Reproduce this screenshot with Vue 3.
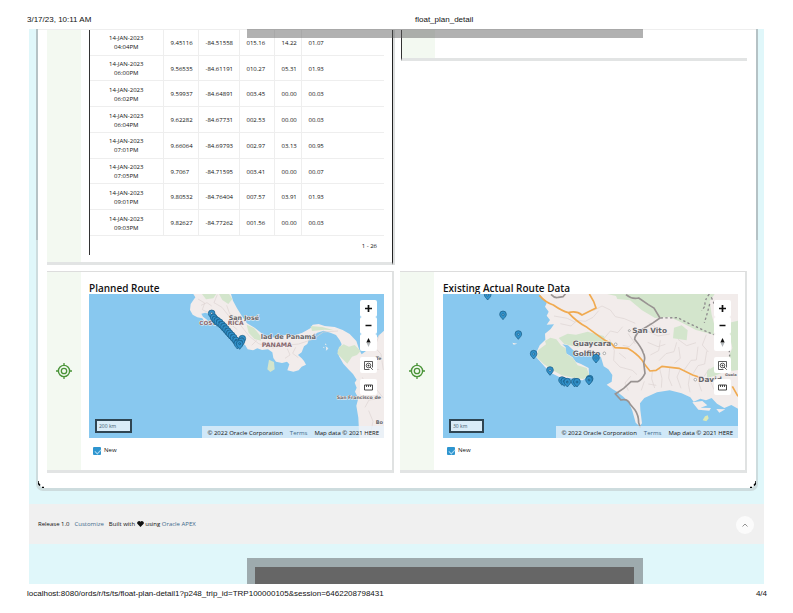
<script setup>
const points = [
  ['04:04PM', '9.45116', '-84.51558', '015.16', '14.22', '01.07'],
  ['06:00PM', '9.56535', '-84.61191', '010.27', '05.31', '01.93'],
  ['06:02PM', '9.59937', '-84.64891', '003.45', '00.00', '00.03'],
  ['06:04PM', '9.62282', '-84.67731', '002.53', '00.00', '00.03'],
  ['07:01PM', '9.66064', '-84.69793', '002.97', '03.13', '00.95'],
  ['07:05PM', '9.7067', '-84.71595', '003.41', '00.00', '00.07'],
  ['09:01PM', '9.80532', '-84.76404', '007.57', '03.91', '01.93'],
  ['09:03PM', '9.82627', '-84.77262', '001.56', '00.00', '00.03'],
]

const maps = [
  {
    id: 'planned',
    title: 'Planned Route',
    scale: '200 km',
    pins: [[368, 66], [374, 78], [379, 84], [385, 88], [392, 93], [399, 100], [405, 106], [411, 113], [417, 120], [422, 126], [428, 132], [434, 139], [441, 147], [460, 142], [457, 150], [445, 156], [452, 157]],
  },
  {
    id: 'actual',
    title: 'Existing Actual Route Data',
    scale: '30 km',
    pins: [[134, 18], [180, 77], [226, 136], [272, 195], [321, 244], [459, 207], [357, 274], [364, 277], [373, 279], [395, 279], [402, 279], [440, 270], [438, 273]],
  },
]
</script>

<template>
  <div class="sheet">
    <header class="print-line">
      <span>3/17/23, 10:11 AM</span>
      <span>float_plan_detail</span>
    </header>

    <div class="page">
      <div class="band band-top"></div>
      <main class="frame">
        <div class="board">
          <section class="panel log">
            <div class="strip"></div>
            <div class="body">
              <div class="report">
                <table>
                  <tbody>
                    <tr v-for="p in points" :key="p[0]">
                      <td>14-JAN-2023<br />{{ p[0] }}</td>
                      <td v-for="n in 5" :key="n">{{ p[n] }}</td>
                    </tr>
                  </tbody>
                </table>
                <p class="count">1 - 26</p>
              </div>
            </div>
          </section>

          <section class="panel stub">
            <div class="strip"></div>
          </section>

          <section v-for="m in maps" :key="m.id" class="panel route">
            <div class="strip">
              <svg class="target" viewBox="0 0 16 16" fill="none" stroke="#4a9438">
                <circle cx="8" cy="8" r="5.6" stroke-width="1.4" />
                <circle cx="8" cy="8" r="2.7" stroke-width="1.3" />
                <path d="M8 0v3M8 13v3M0 8h3M13 8h3" stroke-width="1.3" />
              </svg>
            </div>
            <div class="body">
              <h2>{{ m.title }}</h2>
              <div class="map">
                <svg v-if="m.id === 'planned'" class="tiles" viewBox="0 0 885 432" preserveAspectRatio="xMidYMid slice">
                  <path class="land" d="M313 0 319 10 305 30 303 48 311 62 325 70 340 73 347 84 359 86 354 77 342 68 337 59 349 56 362 61 373 76 390 87 403 101 420 124 439 139 456 150 468 152 476 166 492 169 505 163 519 168 537 166 550 175 553 192 561 203 579 207 594 203 601 211 595 229 613 233 629 229 638 218 651 212 645 201 638 193 627 183 638 175 645 157 655 150 659 138 668 125 685 116 704 110 724 116 741 123 752 138 758 151 746 170 750 187 763 209 778 226 792 240 803 257 797 266 803 281 798 293 808 313 802 335 808 371 811 432H885V110L870 124 851 149 831 171 818 181 811 168 802 141 782 120 761 108 737 99 707 96 689 90 671 92 664 103 640 116 618 124 592 122 563 130 532 131 516 116 497 101 474 88 459 67 444 43 432 20 426 0Z" />
                  <path class="wood" d="M339 0h43l-9 13-22 3ZM390 0h30l10 15-12 15-18-12ZM473 92l22 10 19 23 2 15-20-5-17-19ZM750 159l14-8 16 7 17-5 18 18-11 12-15 5-14 21-18-18-12-12ZM540 197l15 7 2 22-13 8-9-8ZM665 96l35 3 35 10-28-2-38 4Z" />
                  <path class="lane" d="M327 15l20 12-7 20 24 12M385 2l-10 24 24 14 22 28 34 26 26 33 28 22 42 13 31-7 47-5 42-14 32-22 44-3M453 96l-10-24-21-13-9-25M488 154l15-15M595 164l8 19-15 10M620 160l-9 18 17 13M430 95l15 12M840 230l30-4M820 250l12 28 32 10 18 23M828 340l12-22 30-4M839 350l13 32-9 45M871 122l-14 38 19 20 7 48M336 34l18-8 14 10" />
                  <path d="M711 158l5 5-4 6M703 160l3 1M708 150l4 2" stroke="#f4f0ee" stroke-width="3" fill="#f4f0ee" />
                  <g class="place">
                    <text x="419" y="77" font-size="19">San José</text>
                    <text x="515" y="136" font-size="20">lad de Panamá</text>
                    <text class="country" x="331" y="93" font-size="17">COSTA</text>
                    <text class="country" x="416" y="93" font-size="18">RICA</text>
                    <text class="country" x="518" y="160" font-size="19">PANAMA</text>
                    <text x="743" y="315" font-size="14">San Francisco de</text>
                    <text x="860" y="197" font-size="14">Te</text>
                    <text x="860" y="391" font-size="15">Bo</text>
                  </g>
                  <g class="pins">
                    <path v-for="(p, i) in m.pins" :key="i" :transform="`translate(${p[0]} ${p[1]})`" d="M0 9C-4 3-10-1-10-8a10 10 0 0 1 20 0C10-1 4 3 0 9ZM-3-8a3 3 0 1 0 6 0 3 3 0 0 0-6 0Z" />
                  </g>
                </svg>
                <svg v-else class="tiles" viewBox="0 0 885 432" preserveAspectRatio="xMidYMid slice">
                  <path class="land" d="M289 0 301 15 311 28 306 38 317 53 311 65 321 78 311 92 333 91 323 105 306 119 307 137 290 154 279 178 280 190 306 219 329 239 356 253 382 252 401 257 419 259 438 246 437 222 414 210 399 204 388 189 369 178 368 160 358 151 375 154 391 169 410 181 434 176 458 174 474 190 482 217 496 226 508 243 506 263 491 272 508 285 522 293 541 308 557 324 568 350 578 386 590 397 597 388 592 349 591 328 604 312 642 295 680 289 716 298 742 310 752 323 772 314 789 319 806 312 822 329 844 342 865 333 885 344V0Z" />
                  <path class="land" d="M748 325l30-4 15 13-20 7 31 1-5 8-33-3ZM820 345l27 1-18 10ZM208 146l15 3-11 3Z" />
                  <path class="wood" d="M306 141l16-10 18 5 15 19 13 8 3 17 19 13 14 21 27 8 8 22-18 11-28-3-37-8-26-15-27-18-21-21 4-22 23-17ZM347 132l27-13 25 3 35-9 48 13 9 19-16 11-35-6-36 10-40-10ZM493 0h322l-15 22 6 40 8 31-2 29-53-14-54-28-27-11-42 3-39-23-36-30-38-4-4-9ZM693 101l23-7 18 15-3 30-41-6ZM792 230l20-12 23-3 5 20-24 10-24 7ZM852 88l33-8v148l-20 3-7-45 10-24Z" />
                  <path d="M794 364l3 9-7 9-11-3 7-12Z" fill="#dce8b5" />
                  <path class="lane" d="M352 89l32 7 18-17 25 3 23-12 17-20M333 66l40 7 24 12M451 50l26-14 25 12 15 20 27 6 33 14M480 137l22-26 22 5 15-18M500 136l14 34-2 29 19 20 37 10 14 13M528 177l21 17M539 154l20 4 18-19M577 150l-22-32M556 290l-10-23 17-20M628 231l-2 23 9 28M650 224l7 30-2 27M680 222l-3 30 10 24M711 228l-9 21 12 34M741 240l-5 31 5 24M774 249l-6 20 8 23M800 256l13 31M622 183l25-13 5-31M648 200l21-21 24-6 8-28M694 208l18-15-5-34M722 230l22-31 16-1 5-40M750 239l15-24 20-5 6-38M783 248l16-25M615 112l30 14 35-6M617 86l25 18M614 145l31 13 22-7M705 136l26 19 28-9M790 122l-12 31 18 21M850 266l-6 30M604 262l-9 27M616 270l24 4" />
                  <path d="M289 4q18 21 42 29 26 18 45 23 25 28 56 44 30 22 51 37l23 12 10 12 38 2q26 15 42 34 12 20 25 34l18-2 18-12 51 6 41 20 27 9M376 56q24-7 41 7l42-21q-5-20-20-42M868 277l17 30" fill="none" stroke="#f0aa50" stroke-width="5" />
                  <path d="M324 1q12 13 22 9l14-2 10-12M549 2q18 15 38 10l29 20 17 10 18 30-20 14-44 27q-12 14-12 23 21 26 25 39 9 15 2 31l4 32q-9 19-22 25h-20l-22 20-25 17 17 18q20-5 27 12l15 18q11 16 11 38l5 15" fill="none" stroke="#999392" stroke-width="5" />
                  <path d="M653 72l51-1 33 17 30 14 45 20M799 0q-17 22-12 35l-11 15M800 30q-8 32-16 56M805 10q9 19 12 30M857 140l3 47" fill="none" stroke="#8d898c" stroke-width="4" stroke-dasharray="7 7" />
                  <g class="place">
                    <text x="568" y="117" font-size="22">San Vito</text>
                    <text x="389" y="157" font-size="22">Guaycara</text>
                    <text x="389" y="186" font-size="22">Golfito</text>
                    <text x="766" y="264" font-size="22">David</text>
                    <text x="846" y="247" font-size="11">Guala</text>
                  </g>
                  <g fill="#fff" stroke="#888" stroke-width="2">
                    <circle cx="518" cy="151" r="4" /><circle cx="484" cy="178" r="4" /><circle cx="559" cy="110" r="3" /><circle cx="757" cy="257" r="4" />
                  </g>
                  <g class="pins">
                    <path v-for="(p, i) in m.pins" :key="i" :transform="`translate(${p[0]} ${p[1]})`" d="M0 0C-4-6-10-9-10-16a10 10 0 0 1 20 0C10-9 4-6 0 0ZM-3-15a3 3 0 1 0 6 0 3 3 0 0 0-6 0Z" />
                  </g>
                </svg>

                <div class="tools">
                  <div class="group">
                    <button type="button" aria-label="Zoom in">
                      <svg viewBox="0 0 9 9"><path d="M4.500 1v7M1 4.500h7" stroke="#111" stroke-width="1.700" /></svg>
                    </button>
                    <button type="button" aria-label="Zoom out">
                      <svg viewBox="0 0 9 9"><path d="M1.500 4.500h6" stroke="#111" stroke-width="1.500" /></svg>
                    </button>
                    <button type="button" aria-label="Reset north">
                      <svg viewBox="0 0 9 9"><path d="M4.500 0 6.700 4.500H2.300Z" fill="#111" /><path d="M4.500 9 6.300 5H2.700Z" fill="#b3b8bb" /></svg>
                    </button>
                  </div>
                  <button type="button" aria-label="Zoom to area">
                    <svg viewBox="0 0 9 9" fill="none" stroke="#333" stroke-width=".8"><path d="M.5 8.500v-8h8v6M.5 8.500h5M6 6l2.800 2.800" /><circle cx="4.500" cy="4.500" r="2.300" /><path d="M3.500 4.500h2M4.500 3.500v2" /></svg>
                  </button>
                  <button type="button" aria-label="Measure distance">
                    <svg viewBox="0 0 9 9" fill="none" stroke="#333" stroke-width=".9"><path d="M.5 2h8v5h-8ZM2.500 2v2M4.500 2v2M6.500 2v2" /></svg>
                  </button>
                </div>

                <div class="scale" :class="m.id">{{ m.scale }}</div>
                <p class="credit">
                  <span>© 2022 Oracle Corporation</span>
                  <a href="#terms">Terms</a>
                  <span>Map data © 2021 HERE</span>
                </p>
              </div>
              <label class="layer" :for="`layer-${m.id}`">
                <input :id="`layer-${m.id}`" type="checkbox" checked />
                New
              </label>
            </div>
          </section>
          <svg class="corner left" viewBox="0 0 8 8"><path d="M0 1v2l2 2.500M4 7.500h2" /></svg>
          <svg class="corner right" viewBox="0 0 8 8"><path d="M8 1v2L6 5.500M4 7.500H2" /></svg>
        </div>
      </main>

      <footer class="release">
        <span>Release 1.0</span>
        <a href="#customize">Customize</a>
        <span>
          Built with
          <svg class="heart" viewBox="0 0 8 7"><path d="M4 7 .6 3.600A2 2 0 0 1 4 1a2 2 0 0 1 3.400 2.600Z" /></svg>
          using <a href="#apex">Oracle APEX</a>
        </span>
        <button class="top" type="button" aria-label="Start of page">
          <svg viewBox="0 0 8 8"><path d="M1.500 5.500 4 3l2.500 2.500" fill="none" stroke="#777" stroke-width=".8" /></svg>
        </button>
      </footer>

      <div class="band band-bottom"></div>
    </div>

    <footer class="print-line foot">
      <span>localhost:8080/ords/r/ts/ts/float-plan-detail1?p248_trip_id=TRP100000105&amp;session=6462208798431</span>
      <span>4/4</span>
    </footer>
  </div>
</template>

<style>
body {
  background: #fff;
}
</style>

<style scoped>
* {
  box-sizing: border-box;
}
.sheet {
  font-family: "Open Sans", "Noto Sans", sans-serif;
  font-size: 6px;
  line-height: 9px;
  color: #111;
}
.print-line {
  display: grid;
  grid-template-columns: 388fr 352fr;
  align-items: center;
  height: 29px;
  padding: 11px 26px 0 27px;
  font: 8px/10px "Liberation Sans", Arial, sans-serif;
  color: #111;
}
.page {
  position: relative;
  margin: 0 29px;
  background: #e0f7fa;
}
.band {
  margin: 0 121px 0 218px;
}
.band-top {
  position: absolute;
  z-index: 2;
  top: 0;
  left: 0;
  right: 0;
  height: 9px;
  background: rgba(90, 90, 90, 0.47);
}
.band-bottom {
  height: 26px;
  margin-top: 14px;
  border: solid #9eabae;
  border-width: 9px 9px 0 8px;
  background: #666;
}
.frame {
  margin: 0 6px 0 7px;
  padding: 0 2px 3px;
  border-radius: 0 0 7px 7px;
  background: linear-gradient(#b5c2c5 211px, #cddcde 211px);
}
.board {
  position: relative;
  display: grid;
  grid-template-columns: 1fr 1fr;
  align-items: start;
  gap: 6px;
  padding: 0 9px 15px;
  border-top: 1px solid #eee;
  border-radius: 0 0 7px 7px;
  background: #fff;
}
.corner {
  position: absolute;
  bottom: 0;
  width: 8px;
  height: 8px;
  fill: none;
  stroke: #000;
  stroke-width: 1.5;
}
.corner.left {
  left: 0;
}
.corner.right {
  right: 0;
}
.panel {
  display: grid;
  grid-template-columns: 34px minmax(0, 1fr);
  border-bottom: 3px solid #e2e4e4;
}
.strip {
  display: flex;
  align-items: center;
  justify-content: center;
  background: #f3f9f1;
}
.body {
  padding: 0 8px;
}
.log {
  margin-right: 1px;
  border-right: 1px solid #222;
  box-shadow: 2px 0 0 #dcdede;
}
.report {
  border-left: 1px solid #333;
}
.log .body {
  padding-bottom: 7px;
}
.stub {
  grid-template-columns: 33px minmax(0, 1fr);
  height: 31px;
  margin-left: 1px;
  border-left: 1px solid #333;
}
table {
  width: 100%;
  height: 206px;
  border-collapse: collapse;
  table-layout: fixed;
}
td {
  padding: 2px 0 0 7px;
  border-bottom: 1px solid #eee;
  border-right: 1px solid #eee;
}
td:first-child {
  width: 73px;
  padding: 2px 0 0;
  text-align: center;
}
td:nth-child(2),
td:nth-child(4) {
  width: 35px;
}
td:nth-child(3) {
  width: 41px;
}
td:nth-child(5) {
  width: 27px;
}
td:last-child {
  border-right: 0;
}
p {
  margin: 0;
}
.count {
  padding: 6px 7px 4px;
  text-align: right;
}
.route {
  border-top: 1px solid #ddd;
  border-right: 2px solid #e0e2e2;
}
.route:nth-child(even) .body {
  padding: 0 7px 0 9px;
}
.target {
  width: 16px;
  height: 16px;
}
h2 {
  margin: 0;
  padding-top: 10px;
  font-size: 10px;
  line-height: 12px;
  font-weight: 600;
  color: #111;
}
.map {
  position: relative;
  height: 144px;
  overflow: hidden;
  background: #88c8ef;
}
.tiles {
  display: block;
  width: 100%;
  height: 100%;
}
.land {
  fill: #f2eceb;
}
.wood {
  fill: #d3e5cc;
}
.lane {
  fill: none;
  stroke: #ddd3d1;
  stroke-width: 2;
}
.place {
  font-family: "DejaVu Sans", sans-serif;
  font-weight: 700;
  fill: #66666b;
  stroke: #f6f2f0;
  stroke-width: 3px;
  paint-order: stroke;
}
.country {
  fill: #86686f;
}
.pins {
  fill: #3191ca;
  fill-rule: evenodd;
  stroke: #17587f;
  stroke-width: 2;
}
.tools {
  position: absolute;
  top: 6px;
  right: 7px;
  display: grid;
  gap: 6px;
}
.tools button {
  display: flex;
  align-items: center;
  justify-content: center;
  width: 17px;
  height: 16px;
  padding: 0;
  border: 0;
  border-radius: 2px;
  background: #fff;
}
.tools .group button {
  height: 17px;
}
.tools svg {
  width: 9px;
  height: 9px;
}
.scale {
  position: absolute;
  left: 6px;
  bottom: 5px;
  width: 37px;
  height: 14px;
  padding-left: 2px;
  border: 2px solid #2f4552;
  background: #d9ecf8;
  font-size: 5px;
  line-height: 10px;
  color: #44606f;
}
.scale.actual {
  width: 35px;
}
.credit {
  position: absolute;
  right: 0;
  bottom: 0;
  display: flex;
  gap: 7px;
  height: 12px;
  padding: 3px 5px 0;
  background: rgba(232, 243, 251, 0.75);
  color: #111;
}
a {
  color: #41698a;
  text-decoration: none;
}
.layer {
  display: flex;
  align-items: center;
  gap: 3px;
  padding: 8px 4px 15px;
}
.layer input {
  width: 8px;
  height: 8px;
  margin: 0;
  appearance: none;
  border-radius: 1px;
  background: #2e95cf;
}
.layer input::before {
  content: "";
  display: block;
  width: 5px;
  height: 3px;
  margin: 2px 0 0 2px;
  border: solid #a9d8f2;
  border-width: 0 0 1px 1px;
  transform: rotate(-45deg);
}
.release {
  display: flex;
  align-items: center;
  gap: 5px;
  height: 40px;
  margin-top: 13px;
  padding: 1px 10px 0 9px;
  background: #f0f0f0;
}
.heart {
  width: 7px;
  height: 6px;
  vertical-align: -1px;
  fill: #111;
}
.top {
  display: flex;
  align-items: center;
  justify-content: center;
  width: 18px;
  height: 18px;
  margin-left: auto;
  padding: 0;
  border: 0;
  border-radius: 50%;
  background: #fbfbfb;
}
.top svg {
  width: 8px;
  height: 8px;
}
.foot {
  display: flex;
  justify-content: space-between;
  height: 20px;
  padding-top: 0;
}
</style>
